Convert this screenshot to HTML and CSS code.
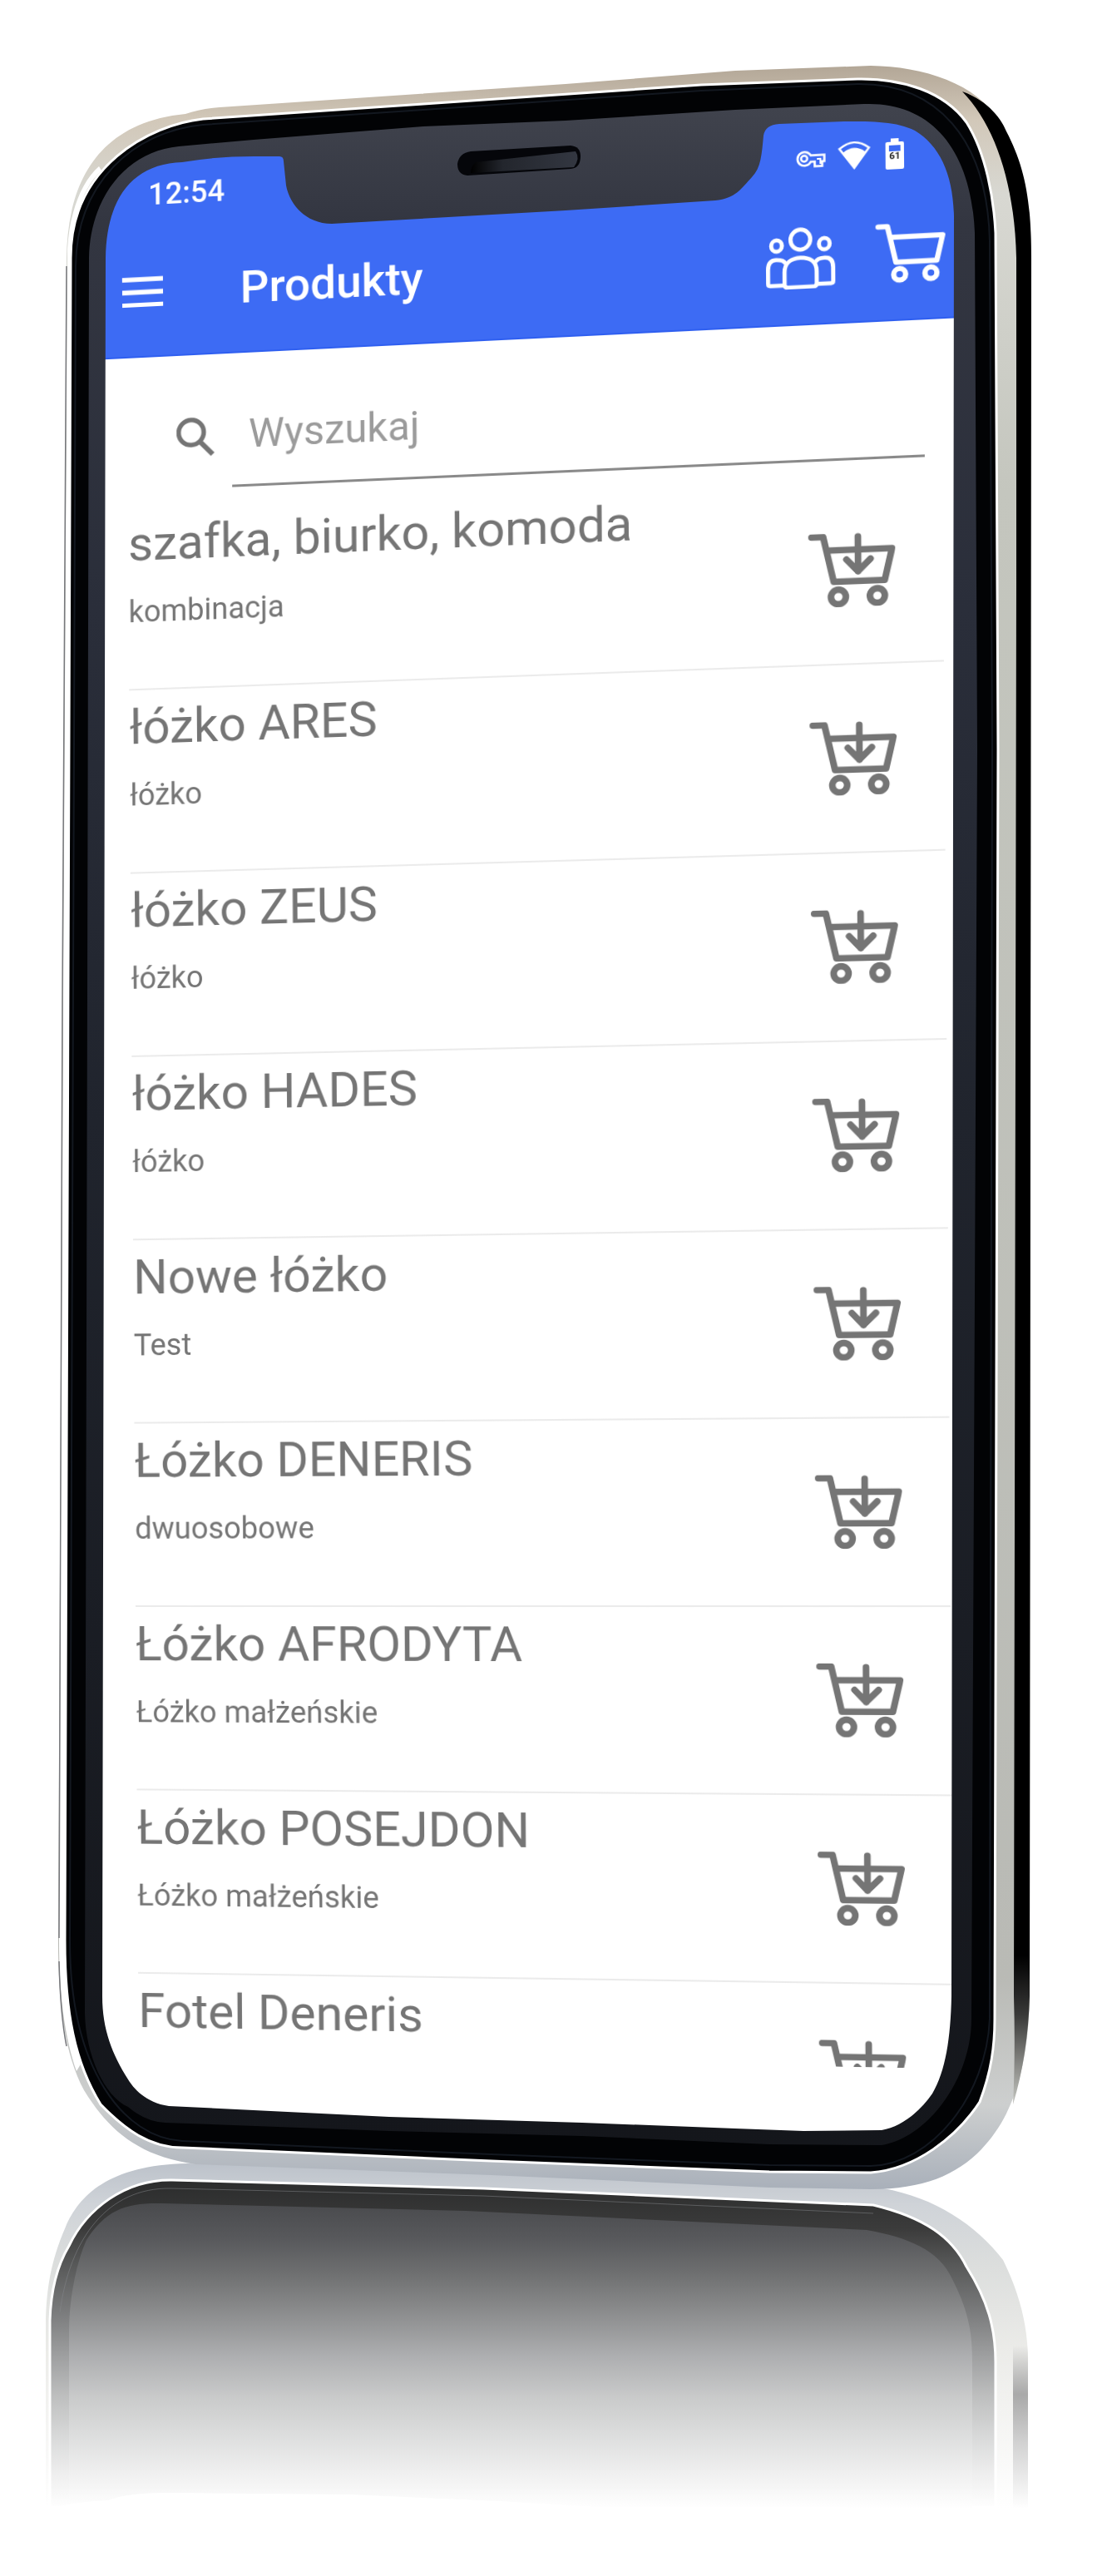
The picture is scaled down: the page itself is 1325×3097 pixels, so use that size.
FILE: index.html
```html
<!DOCTYPE html>
<html lang="pl">
<head>
    <meta charset="UTF-8">
    <meta name="viewport" content="width=device-width, initial-scale=1.0">
    <title>Produkty</title>
    <link rel="stylesheet" href="styles.css">
</head>
<body>

    <!-- Shared icons -->
    <svg class="sprite" aria-hidden="true">
        <symbol id="cart" viewBox="0 0 105 92">
            <g fill="none" stroke="currentColor" stroke-width="8" stroke-linecap="round" stroke-linejoin="round">
                <path d="M4 4H18L30.500 60H92L101 21H22"/>
                <circle cx="36" cy="79" r="9"/>
                <circle cx="83" cy="79" r="9"/>
            </g>
        </symbol>
        <symbol id="cart-add" viewBox="0 0 105 92">
            <use href="#cart"/>
            <path d="M60 5V48M46 33L60 48L75 33" fill="none" stroke="currentColor" stroke-width="8" stroke-linecap="round" stroke-linejoin="round"/>
        </symbol>
    </svg>

    <main class="phone">
        <div class="app">
            <header class="top">
                <div class="status-bar">
                    <span class="time">12:54</span>
                    <svg class="key" viewBox="0 0 34 22" aria-hidden="true">
                        <path d="M17 7.500H32.500V15H30V20.500H21.500V15H17A8 8 0 1 1 17 7.500Z" fill="none" stroke="#fff" stroke-width="2.600"/>
                        <circle cx="9.500" cy="11" r="3.500" fill="none" stroke="#fff" stroke-width="2.500"/>
                        <path d="M24 12H28V18" fill="none" stroke="#fff" stroke-width="2"/>
                    </svg>
                    <svg class="wifi" viewBox="0 0 40 36" aria-hidden="true">
                        <path d="M20 35L1 9Q20 -7 39 9Z" fill="#fff"/>
                        <path d="M4.500 9.500Q20 -3 35.500 9.500L32.500 13.500Q20 4 7.500 13.500Z" fill="#3d6bf4"/>
                    </svg>
                    <svg class="battery" viewBox="0 0 21 36" aria-hidden="true">
                        <path d="M6 0H15V4H19Q21 4 21 6V34Q21 36 19 36H2Q0 36 0 34V6Q0 4 2 4H6Z" fill="#fff"/>
                        <path d="M4 8H17V15H4Z" fill="#3d6bf4"/>
                        <text x="10.500" y="24" text-anchor="middle" class="battery-level">61</text>
                    </svg>
                </div>
                <div class="app-bar">
                    <button class="icon-btn" aria-label="Menu">
                        <svg class="menu" viewBox="0 0 48 36"><path d="M0 3H48M0 18H48M0 33H48" stroke="#fff" stroke-width="5.500"/></svg>
                    </button>
                    <h1>Produkty</h1>
                    <button class="icon-btn" aria-label="Klienci">
                        <svg class="bar-icon" viewBox="0 0 84 76">
                            <g fill="none" stroke="#fff" stroke-width="5" stroke-linejoin="round">
                                <ellipse cx="42" cy="15" rx="12" ry="12.500"/>
                                <ellipse cx="13" cy="21.500" rx="6.500" ry="7"/>
                                <ellipse cx="71" cy="21.500" rx="6.500" ry="7"/>
                                <path d="M22 71H5Q2.500 71 2.500 68V51C2.500 42 7 39 12.500 39C18 39 22 40 24 44"/>
                                <path d="M62 71H79Q81.500 71 81.500 68V51C81.500 42 77 39 71.500 39C66 39 62 40 60 44"/>
                                <path d="M26 74Q22.500 74 22.500 70V55C22.500 43 31 37.500 42 37.500S61.500 43 61.500 55V70Q61.500 74 58 74Z"/>
                            </g>
                        </svg>
                    </button>
                    <button class="icon-btn" aria-label="Koszyk">
                        <svg class="bar-icon"><use href="#cart"/></svg>
                    </button>
                </div>
            </header>

            <form class="search">
                <label for="search" aria-label="Wyszukaj">
                    <svg class="search-icon" viewBox="0 0 46 48">
                        <circle cx="17.500" cy="18.500" r="15" fill="none" stroke="currentColor" stroke-width="5.500"/>
                        <path d="M29 31L43 45.500" stroke="currentColor" stroke-width="6"/>
                    </svg>
                </label>
                <input type="text" id="search" placeholder="Wyszukaj">
            </form>

            <ul class="products">
                <li>
                    <div class="info"><h2>szafka, biurko, komoda</h2><p>kombinacja</p></div>
                    <button class="icon-btn add" aria-label="Dodaj do koszyka"><svg><use href="#cart-add"/></svg></button>
                </li>
                <li>
                    <div class="info"><h2>łóżko ARES</h2><p>łóżko</p></div>
                    <button class="icon-btn add" aria-label="Dodaj do koszyka"><svg><use href="#cart-add"/></svg></button>
                </li>
                <li>
                    <div class="info"><h2>łóżko ZEUS</h2><p>łóżko</p></div>
                    <button class="icon-btn add" aria-label="Dodaj do koszyka"><svg><use href="#cart-add"/></svg></button>
                </li>
                <li>
                    <div class="info"><h2>łóżko HADES</h2><p>łóżko</p></div>
                    <button class="icon-btn add" aria-label="Dodaj do koszyka"><svg><use href="#cart-add"/></svg></button>
                </li>
                <li>
                    <div class="info"><h2>Nowe łóżko</h2><p>Test</p></div>
                    <button class="icon-btn add" aria-label="Dodaj do koszyka"><svg><use href="#cart-add"/></svg></button>
                </li>
                <li>
                    <div class="info"><h2>Łóżko DENERIS</h2><p>dwuosobowe</p></div>
                    <button class="icon-btn add" aria-label="Dodaj do koszyka"><svg><use href="#cart-add"/></svg></button>
                </li>
                <li>
                    <div class="info"><h2>Łóżko AFRODYTA</h2><p>Łóżko małżeńskie</p></div>
                    <button class="icon-btn add" aria-label="Dodaj do koszyka"><svg><use href="#cart-add"/></svg></button>
                </li>
                <li>
                    <div class="info"><h2>Łóżko POSEJDON</h2><p>Łóżko małżeńskie</p></div>
                    <button class="icon-btn add" aria-label="Dodaj do koszyka"><svg><use href="#cart-add"/></svg></button>
                </li>
                <li>
                    <div class="info"><h2>Fotel Deneris</h2></div>
                    <button class="icon-btn add" aria-label="Dodaj do koszyka"><svg><use href="#cart-add"/></svg></button>
                </li>
            </ul>
        </div>

        <!-- Phone body, the screen is a hole in the bezel -->
        <svg class="frame" viewBox="0 0 1325 3097" aria-hidden="true">
            <defs>
                <linearGradient id="metal" gradientUnits="userSpaceOnUse" x1="0" y1="80" x2="0" y2="2632">
                    <stop offset="0" stop-color="#b3a797"/>
                    <stop offset=".025" stop-color="#d2c8b9"/>
                    <stop offset=".06" stop-color="#d8d8d2"/>
                    <stop offset=".2" stop-color="#c4c6be"/>
                    <stop offset=".9" stop-color="#b9bab5"/>
                    <stop offset=".96" stop-color="#cdcfcf"/>
                    <stop offset="1" stop-color="#a9b0ba"/>
                </linearGradient>
                <linearGradient id="bezel" gradientUnits="userSpaceOnUse" x1="0" y1="120" x2="0" y2="2580">
                    <stop offset="0" stop-color="#41444e"/>
                    <stop offset=".06" stop-color="#333641"/>
                    <stop offset=".25" stop-color="#2a2e3a"/>
                    <stop offset=".5" stop-color="#20242d"/>
                    <stop offset="1" stop-color="#14161b"/>
                </linearGradient>
                <linearGradient id="side" gradientUnits="userSpaceOnUse" x1="0" y1="110" x2="0" y2="2520">
                    <stop offset="0" stop-color="#000"/>
                    <stop offset=".93" stop-color="#000"/>
                    <stop offset=".96" stop-color="#3a3a39"/>
                    <stop offset="1" stop-color="#b9bab5"/>
                </linearGradient>
                <linearGradient id="speaker" x1="0" x2="1" y1="0" y2="0">
                    <stop offset="0" stop-color="#000"/>
                    <stop offset=".3" stop-color="#23262d"/>
                    <stop offset="1" stop-color="#333741"/>
                </linearGradient>
                <linearGradient id="mirrorMetal" gradientUnits="userSpaceOnUse" x1="0" y1="2600" x2="0" y2="3016">
                    <stop offset="0" stop-color="#bcc2ca"/>
                    <stop offset=".12" stop-color="#cfd3d8"/>
                    <stop offset=".3" stop-color="#dcdedd"/>
                    <stop offset=".55" stop-color="#ecece9"/>
                    <stop offset="1" stop-color="#fff"/>
                </linearGradient>
                <linearGradient id="mirrorRing" gradientUnits="userSpaceOnUse" x1="0" y1="2620" x2="0" y2="3016">
                    <stop offset="0" stop-color="#2b2c2c"/>
                    <stop offset=".15" stop-color="#3b3b3b"/>
                    <stop offset=".25" stop-color="#555656"/>
                    <stop offset=".41" stop-color="#7c7d7e"/>
                    <stop offset=".54" stop-color="#9fa0a1"/>
                    <stop offset=".66" stop-color="#bebfbf"/>
                    <stop offset=".79" stop-color="#dadbdb"/>
                    <stop offset=".9" stop-color="#efefef"/>
                    <stop offset="1" stop-color="#fff"/>
                </linearGradient>
                <linearGradient id="mirrorGlass" gradientUnits="userSpaceOnUse" x1="0" y1="2648" x2="0" y2="3016">
                    <stop offset="0" stop-color="#494a4d"/>
                    <stop offset=".12" stop-color="#58595c"/>
                    <stop offset=".23" stop-color="#6e6f70"/>
                    <stop offset=".37" stop-color="#8e8f90"/>
                    <stop offset=".5" stop-color="#adaeb0"/>
                    <stop offset=".64" stop-color="#cacbcb"/>
                    <stop offset=".77" stop-color="#dedfdf"/>
                    <stop offset=".88" stop-color="#efefef"/>
                    <stop offset="1" stop-color="#fff"/>
                </linearGradient>
                <linearGradient id="mirrorSide" gradientUnits="userSpaceOnUse" x1="0" y1="2820" x2="0" y2="3016">
                    <stop offset="0" stop-color="#999" stop-opacity="0"/>
                    <stop offset=".3" stop-color="#a9a9a9"/>
                    <stop offset=".6" stop-color="#d2d2d2"/>
                    <stop offset="1" stop-color="#fff"/>
                </linearGradient>
            </defs>

            <!-- Reflection -->
            <path fill="url(#mirrorMetal)" d="M55 3015V2790C56 2755 60 2720 79 2677C95 2640 130 2603 225 2601L590 2610L1062 2631C1124 2642 1174 2675 1206 2717C1228 2762 1236 2800 1236 2840V3015Z"/>
            <path fill="url(#mirrorRing)" stroke="#fff" stroke-width="3" d="M60 3015V2790C61 2755 68 2725 83 2700C104 2656 150 2620 207 2621L581 2631L1050 2651C1112 2666 1145 2690 1162 2725C1188 2766 1197 2800 1197 2840V3015Z"/>
            <path fill="url(#mirrorGlass)" d="M83 3015V2800C84 2760 92 2720 104 2693C128 2656 152 2648 195 2649L560 2658L1042 2681C1092 2690 1129 2705 1145 2740C1163 2776 1169 2800 1169 2840V3015Z"/>
            <path fill="none" stroke="#85888c" stroke-opacity=".5" d="M72 2780C84 2690 130 2630 205 2631L581 2640L1050 2661"/>
            <path fill="url(#mirrorSide)" d="M1218 2820H1236V3015H1218Z"/>
            <path fill="#fff" d="M50 3020Q80 3008 130 3006Q155 2996 210 2997L420 2999L600 3007L720 3014L1240 3015V3040H50Z"/>

            <!-- Metal rim -->
            <path fill="url(#metal)" fill-rule="evenodd" d="M80 310C81 230 110 148 223 137Q240 131 264 129L680 101L884 85L1047 79C1110 80 1175 100 1202 147C1228 187 1240 240 1240 310L1238 2400C1236 2500 1212 2550 1180 2584C1150 2615 1110 2632 1047 2632L925 2630L590 2615L235 2602C165 2592 130 2560 101 2513C78 2470 70 2410 70 2333L75 1200Z
                M85 310L78 2333C78 2420 90 2480 121 2530C150 2560 180 2582 219 2582L590 2598L925 2611L1047 2612C1100 2608 1150 2570 1178 2527C1192 2490 1196 2460 1196 2427L1200 900L1197 280C1195 240 1186 185 1162 147C1135 110 1085 94 1031 95L843 102L509 125L244 143C180 150 85 200 85 310Z"/>
            <path fill="#fff" d="M81 300L76 1200L71 2333C71 2400 78 2450 92 2490L98 2480C86 2440 83 2400 83 2333L87 440V300C89 260 100 225 122 205L119 200C96 220 83 260 81 300Z"/>
            <path fill="none" stroke="#77787c" stroke-width="1.500" d="M80 320L75 1200L71 2330M71 2358C72 2400 74 2430 80 2460"/>
            <path fill="url(#side)" d="M1157 110C1190 122 1205 145 1210 158C1232 200 1240 240 1240 310L1238 2400Q1236 2470 1218 2530Q1221 2470 1219 2400L1222 700V310C1220 220 1196 150 1157 110Z"/>

            <!-- Glass edge -->
            <path fill="#020305" stroke="#fff" stroke-width="3" fill-rule="evenodd" d="M85 310L78 2333C78 2420 90 2480 121 2530C150 2560 180 2582 219 2582L590 2598L925 2611L1047 2612C1100 2608 1150 2570 1178 2527C1192 2490 1196 2460 1196 2427L1200 900L1197 280C1195 240 1186 185 1162 147C1135 110 1085 94 1031 95L843 102L509 125L244 143C180 150 85 200 85 310Z
                M115 310C116 220 165 185 219 185L680 155L1031 135C1110 135 1155 180 1158 280L1156 2427C1154 2500 1110 2570 1047 2570L219 2542C150 2540 113 2470 112 2400Z"/>
            <path fill="none" stroke="#131820" stroke-width="2" d="M91 320C92 220 160 158 244 150L509 132L843 109L1031 101C1125 100 1187 165 1190 290L1193 900L1190 2427C1186 2520 1120 2602 1047 2604L925 2603L590 2590L219 2574C150 2570 84 2490 84 2333Z"/>

            <!-- Bezel with notch -->
            <path fill="url(#bezel)" fill-rule="evenodd" d="M107 310L105 1200L102 2420C103 2470 125 2520 154 2533Q175 2551 199 2552L468 2562L700 2568L925 2578L1060 2579C1115 2570 1168 2500 1168 2427L1175 900L1172 280C1168 180 1120 122 1039 125L884 132L680 145L509 152L305 168L215 176C150 182 108 240 107 310Z
                M127 310C128 240 158 197 219 195Q260 188 305 188H336Q341 188 341 194L344 223C348 245 367 269 399 269L680 253L860 241C884 239 892 226 904 213C915 202 916 185 918 163Q920 150 937 149L1015 146C1050 146 1078 146 1100 157C1130 175 1146 210 1147 260L1144 2400C1143 2450 1137 2490 1121 2517C1105 2540 1083 2557 1060 2561L966 2562L884 2559L700 2552L468 2545L203 2532C175 2528 160 2510 154 2500C135 2470 123 2440 123 2400Z"/>
            <path fill="#05060a" d="M566 182L686 175Q698 176 698 188Q698 202 686 203L562 211Q550 210 550 197Q552 184 566 182Z"/>
            <path fill="url(#speaker)" d="M572 195L692 182Q698 190 690 201L566 208Q566 200 572 195Z"/>
        </svg>
    </main>

</body>
</html>
```
FILE: styles.css
```css
* {
    box-sizing: border-box;
}
body {
    margin: 0;
    background-color: #fff;
    color: #757575;
    font-family: Roboto, sans-serif;
}
h1, h2, p, ul {
    margin: 0;
    padding: 0;
    font-weight: 400;
}
svg {
    display: block;
}
.sprite {
    position: absolute;
    width: 0;
    height: 0;
}
.phone {
    position: relative;
    max-width: 1325px;
    min-height: 3097px;
    margin: 0 auto;
    padding: 165px 165px 0 110px;
    overflow: hidden;
}
/* Drawn over the app */
.frame {
    position: absolute;
    top: 0;
    left: 0;
    width: 100%;
    pointer-events: none;
}
/* The phone is turned slightly to the left */
.app {
    transform-origin: 0 1765px;
    transform: perspective(2150px) rotateY(-4deg) skewX(0.4deg);
}
.top {
    background-color: #3d6bf4;
    border-bottom: 2px solid #2f5ff0;
    border-radius: 170px 170px 0 0;
    color: #fff;
}
.status-bar {
    display: flex;
    align-items: center;
    height: 112px;
    padding: 34px 89px 0 80px;
}
.time {
    margin-right: auto;
    font-size: 36px;
    font-weight: 500;
}
.key {
    width: 34px;
    margin-right: 13px;
}
.wifi {
    width: 39px;
    margin-right: 16px;
}
.battery {
    width: 21px;
}
.battery-level {
    font-size: 11px;
    font-weight: 700;
    fill: #222;
}
.app-bar {
    display: flex;
    align-items: center;
    height: 154px;
    padding: 0 43px 0 48px;
}
.app-bar h1 {
    flex: 1;
    margin-left: 92px;
    font-size: 54px;
    font-weight: 500;
}
.icon-btn {
    padding: 0;
    border: none;
    background: none;
    color: inherit;
    cursor: pointer;
}
.menu {
    width: 49px;
}
.bar-icon {
    width: 79px;
    height: 72px;
    margin-left: 46px;
}
.search {
    display: flex;
    align-items: center;
    padding: 36px 68px 19px 112px;
}
.search-icon {
    width: 46px;
    height: 48px;
}
.search input {
    flex: 1;
    min-width: 0;
    height: 124px;
    margin-left: 20px;
    padding: 0 20px;
    border: none;
    border-bottom: 3px solid #8a8a8a;
    outline: none;
    background: none;
    color: #757575;
    font-family: inherit;
    font-size: 48px;
}
.search input::placeholder {
    color: #9b9b9b;
}
.products {
    height: 1857px;
    padding: 0 48px 0 53px;
    overflow: hidden;
    list-style: none;
}
.products li {
    display: flex;
    align-items: center;
    height: 220px;
    padding-right: 54px;
    border-bottom: 2px solid #ebebeb;
}
.info {
    flex: 1;
    align-self: flex-start;
    padding-top: 8px;
}
.info h2 {
    font-size: 58px;
    line-height: 72px;
}
.info p {
    margin-top: 24px;
    font-size: 36px;
    line-height: 44px;
}
.add svg {
    width: 99px;
    height: 92px;
}
```
